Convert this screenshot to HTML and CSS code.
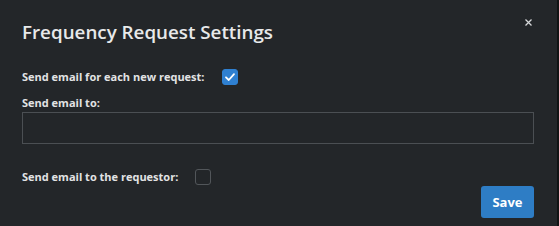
FILE: index.html
```html
<!DOCTYPE html>
<html lang="en">
<head>
    <meta charset="UTF-8">
    <meta name="viewport" content="width=device-width, initial-scale=1.0">
    <title>Frequency Request Settings</title>
    <link rel="stylesheet" href="styles.css">
</head>
<body>

    <div class="modal">
        <div class="modal-header">
            <h2 class="modal-title">Frequency Request Settings</h2>
            <button class="close" aria-label="Close">
                <svg width="7" height="7" viewBox="0 0 7 7">
                    <path d="M0.5 0.5 L6.5 6.5 M6.5 0.5 L0.5 6.5" stroke="#d6d8da" stroke-width="1.3" fill="none"/>
                </svg>
            </button>
        </div>

        <div class="modal-body">
            <div class="check-row first">
                <label for="emailEach">Send email for each new request:</label>
                <span class="checkbox checked" id="emailEach">
                    <svg width="16" height="16" viewBox="0 0 16 16">
                        <path d="M4 8.3 L6.8 11 L12 5.2" stroke="#ffffff" stroke-width="1.8" fill="none" stroke-linecap="round" stroke-linejoin="round"/>
                    </svg>
                </span>
            </div>

            <div class="form-control">
                <label for="emailTo">Send email to:</label>
                <input type="text" id="emailTo">
            </div>

            <div class="check-row">
                <label for="emailRequestor">Send email to the requestor:</label>
                <span class="checkbox" id="emailRequestor"></span>
            </div>
        </div>

        <div class="modal-footer">
            <button class="button">Save</button>
        </div>
    </div>

</body>
</html>
```

FILE: styles.css
```css
body {
    margin: 0;
    background-color: #111314;
    font-family: "Open Sans", "Noto Sans", sans-serif;
    color: #e4e5e6;
}
.modal {
    width: 557px;
    height: 226px;
    box-sizing: border-box;
    background-color: #232629;
    padding: 0 23px 0 22px;
}
.modal-header {
    display: flex;
    justify-content: space-between;
    align-items: flex-start;
    padding-top: 18px;
}
.modal-title {
    margin: 0;
    font-size: 18.8px;
    font-weight: 600;
    line-height: 28px;
    color: #e8e9ea;
}
.close {
    background: none;
    border: none;
    padding: 0;
    margin: 1px 2px 0 0;
    width: 7px;
    height: 7px;
    display: flex;
    cursor: pointer;
}
.close svg {
    display: block;
}
.modal-body {
    margin-top: 23px;
}
label {
    font-size: 11px;
    font-weight: 700;
    line-height: 16px;
    color: #e2e3e4;
}
.check-row {
    display: flex;
    align-items: center;
    gap: 17px;
    margin-top: 25px;
}
.check-row.first {
    margin-top: 0;
}
.checkbox {
    width: 16px;
    height: 16px;
    box-sizing: border-box;
    border: 1px solid #52565a;
    border-radius: 3px;
    display: block;
}
.checkbox.checked {
    background-color: #2f80d1;
    border-color: #2f80d1;
}
.checkbox svg {
    display: block;
    margin: -1px;
}
.form-control {
    margin-top: 10px;
}
.form-control label {
    display: block;
    margin-bottom: 1px;
}
.form-control input {
    display: block;
    width: 100%;
    height: 32px;
    box-sizing: border-box;
    background-color: #232629;
    border: 1px solid #4b4f53;
    border-radius: 0;
    color: #e2e3e4;
    padding: 6px 8px;
}
.modal-footer {
    display: flex;
    justify-content: flex-end;
    margin-top: 1px;
}
.button {
    background-color: #2e7dc5;
    color: #ffffff;
    font-family: "Open Sans", "Noto Sans", sans-serif;
    font-size: 13px;
    font-weight: 700;
    width: 53px;
    height: 32px;
    border: none;
    border-radius: 3px;
    cursor: pointer;
}
```
